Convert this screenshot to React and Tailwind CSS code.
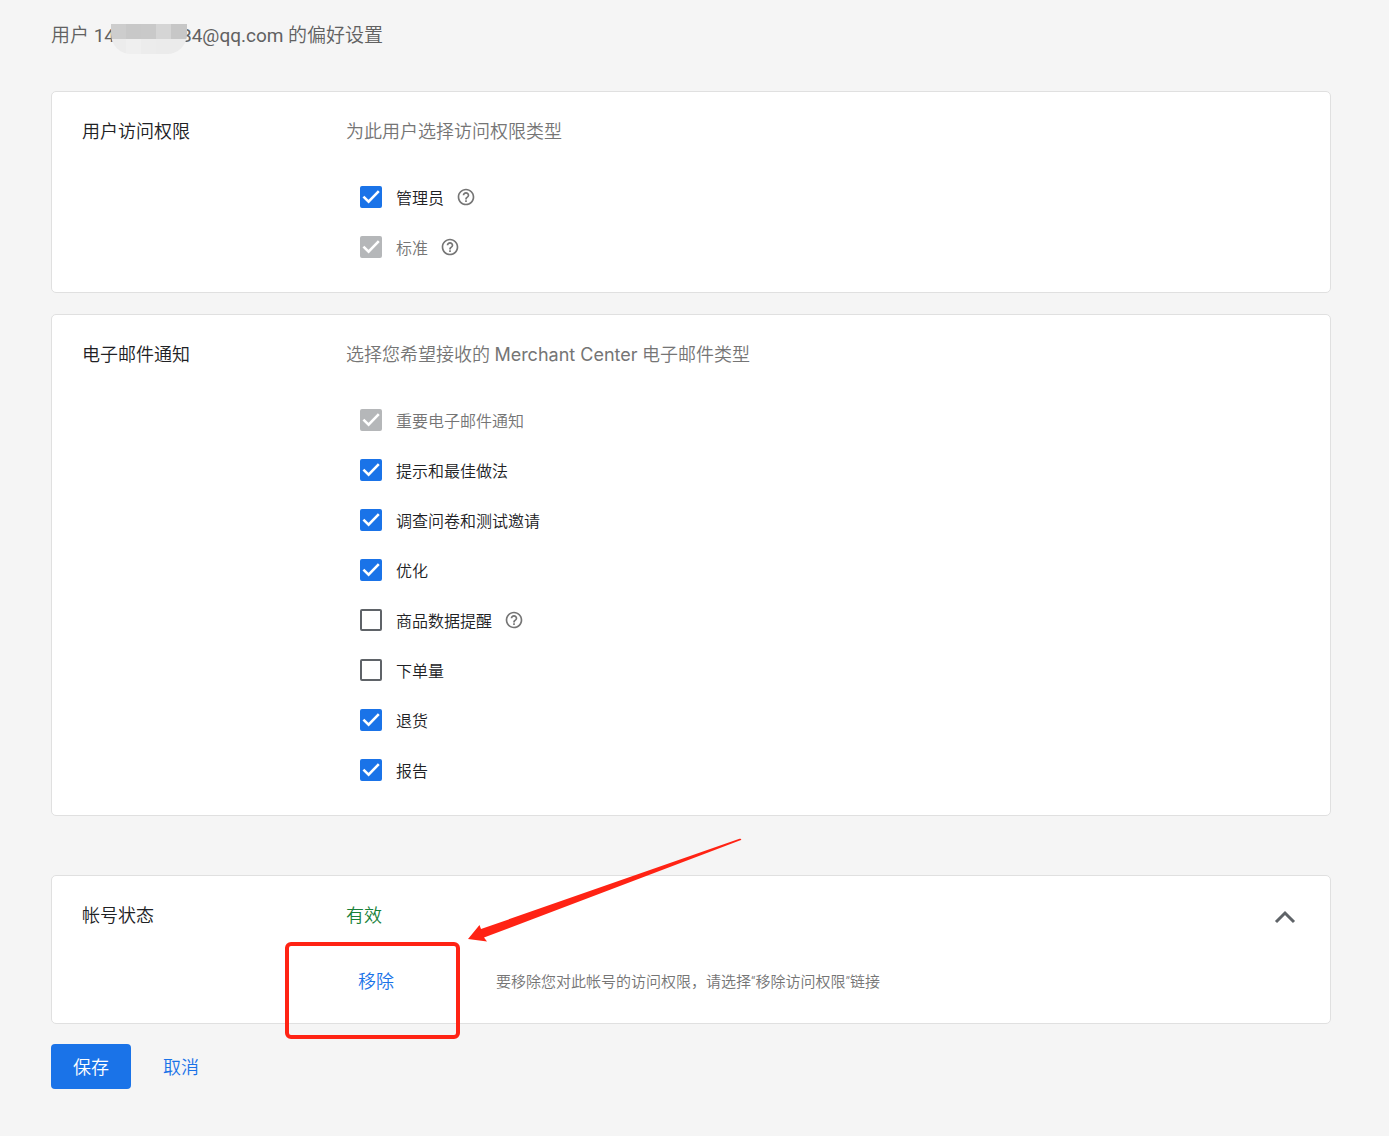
import { useState } from "react";

function Check({ label, checked = false, disabled = false, help = false }) {
  const [on, setOn] = useState(checked);
  const box = disabled
    ? "border-[#b5b7b9] bg-[#b5b7b9]"
    : on
      ? "border-[#1a73e8] bg-[#1a73e8]"
      : "border-[#5f6368] bg-white";
  return (
    <li className="flex h-[50px] items-center">
      <label className={`flex items-center gap-[14px] text-[16px] leading-6 ${disabled ? "text-[#757575]" : "text-[#202124]"}`}>
        <span className="relative flex h-[22px] w-[22px]">
          <input
            type="checkbox"
            checked={on}
            disabled={disabled}
            onChange={(e) => setOn(e.target.checked)}
            className={`h-[22px] w-[22px] appearance-none rounded-[2px] border-2 ${box}`}
          />
          {on && (
            <svg viewBox="0 0 22 22" className="pointer-events-none absolute inset-0 h-full w-full" fill="none" stroke="#fff" strokeWidth="2.6" aria-hidden="true">
              <path d="M3.400 10.600 L8.600 15.600 L18.800 5.200" />
            </svg>
          )}
        </span>
        <span className="pt-[3px]">{label}</span>
      </label>
      {help && (
        <button type="button" aria-label={`${label}帮助`} className="ml-3">
          <svg viewBox="0 0 24 24" className="h-5 w-5 fill-[#757575]" aria-hidden="true">
            <path d="M11 18h2v-2h-2v2zm1-16C6.48 2 2 6.48 2 12s4.48 10 10 10 10-4.480 10-10S17.520 2 12 2zm0 18c-4.410 0-8-3.590-8-8s3.590-8 8-8 8 3.590 8 8-3.590 8-8 8zm0-14c-2.210 0-4 1.790-4 4h2c0-1.100.9-2 2-2s2 .9 2 2c0 2-3 1.750-3 5h2c0-2.250 3-2.500 3-5 0-2.210-1.790-4-4-4z" />
          </svg>
        </button>
      )}
    </li>
  );
}

function Card({ title, children }) {
  return (
    <section className="relative flex rounded-[5px] border border-[#e0e0e0] bg-white pt-7 pb-5 pl-[30px]">
      <h2 className="w-[264px] shrink-0 text-[18px] leading-6 text-[#202124]">{title}</h2>
      <div className="min-w-0 flex-1">{children}</div>
    </section>
  );
}

const mosaic = [
  "bg-[#cdcdcd]", "bg-[#c8c8c8]", "bg-[#c9c9c9]", "bg-[#d5d5d5]", "bg-[#c7c7c7]",
  "bg-[#ececec]", "bg-[#efefef]", "bg-[#ececec]", "bg-[#ebebeb]", "bg-[#ebebeb]",
];

export default function App() {
  const [open, setOpen] = useState(true);
  return (
    <main className="min-h-screen bg-[#f5f5f5] pt-6 pr-[58px] pb-[47px] pl-[51px] font-[Roboto,'Noto_Sans_CJK_SC',sans-serif] font-[350]">
      <h1 className="flex h-6 items-center text-[19px] leading-6 whitespace-pre text-[#616161]">
        <span>用户 </span>
        <span className="relative font-normal">
          14<span className="inline-block w-[66px]" />84@qq.com
          <span className="absolute top-0 left-[17px] grid h-[30px] w-[76px] grid-cols-5 overflow-hidden rounded-b-[20px]">
            {mosaic.map((c, i) => (
              <span key={i} className={c} />
            ))}
          </span>
        </span>
        <span> 的偏好设置</span>
      </h1>

      <div className="mt-[43px] flex flex-col gap-[21px]">
        <Card title="用户访问权限">
          <p className="text-[18px] leading-6 text-[#757575]">为此用户选择访问权限类型</p>
          <ul className="mt-7 pl-[14px]">
            <Check label="管理员" checked help />
            <Check label="标准" checked disabled help />
          </ul>
        </Card>
        <Card title="电子邮件通知">
          <p className="text-[18px] leading-6 text-[#757575]">
            选择您希望接收的 <span className="font-[Inter,sans-serif] font-normal">Merchant Center</span> 电子邮件类型
          </p>
          <ul className="mt-7 pl-[14px]">
            <Check label="重要电子邮件通知" checked disabled />
            <Check label="提示和最佳做法" checked />
            <Check label="调查问卷和测试邀请" checked />
            <Check label="优化" checked />
            <Check label="商品数据提醒" help />
            <Check label="下单量" />
            <Check label="退货" checked />
            <Check label="报告" checked />
          </ul>
        </Card>
      </div>

      <div className="mt-[59px]">
        <Card title="帐号状态">
          <div className="flex justify-between pr-[33px]">
            <p className="text-[18px] leading-6 text-[#188038]">有效</p>
            <button type="button" aria-label="收起帐号状态" aria-expanded={open} onClick={() => setOpen(!open)} className="h-6 w-6">
              <svg viewBox="0 0 24 24" className="h-6 w-6" fill="none" stroke="#5f6368" strokeWidth="3" aria-hidden="true">
                <path d={open ? "M3 18 L12 9 L21 18" : "M3 9 L12 18 L21 9"} />
              </svg>
            </button>
          </div>
          {open && (
            <div className="mt-[42px] mb-[9px] flex items-center pl-3">
              <button type="button" className="w-[138px] text-left text-[18px] leading-6 text-[#1a73e8]">移除</button>
              <p className="text-[15px] leading-6 text-[#757575]">要移除您对此帐号的访问权限，请选择“移除访问权限”链接</p>
            </div>
          )}
          <div className="pointer-events-none absolute top-[66px] left-[233px] h-[97px] w-[175px] rounded-[6px] border-4 border-[#ff2314]" />
          <svg viewBox="0 0 276 104" className="pointer-events-none absolute top-[-38px] left-[415px] h-[104px] w-[276px] fill-[#ff2314]" aria-hidden="true">
            <path d="M1 101 L12.500 87 L14 91 L272.500 0.800 Q275 0.500 274 2 L17 99.500 L20 103.500 Z" />
          </svg>
        </Card>
      </div>

      <div className="mt-5 flex items-center gap-8">
        <button type="button" className="h-[45px] w-20 rounded bg-[#1a73e8] pt-[3px] text-[18px] leading-6 text-white">保存</button>
        <button type="button" className="pt-[3px] text-[18px] leading-6 text-[#1a73e8]">取消</button>
      </div>
    </main>
  );
}
